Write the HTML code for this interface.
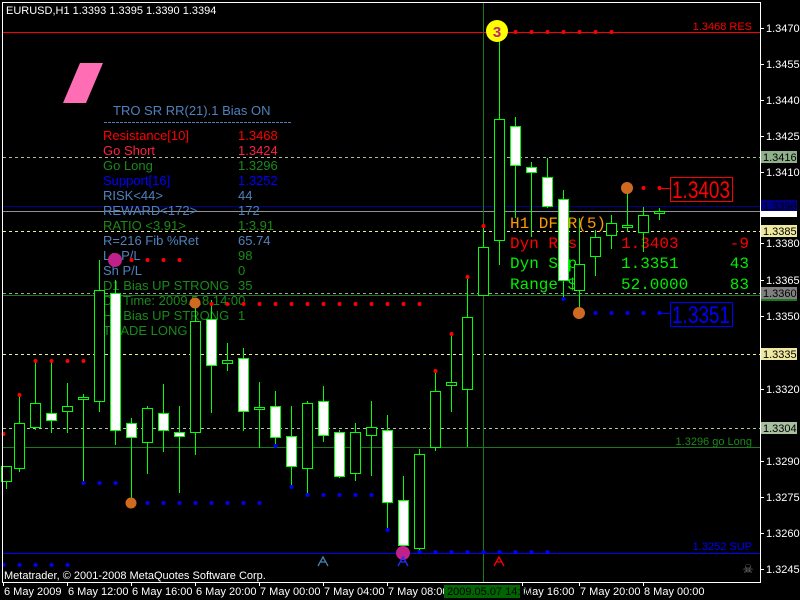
<!DOCTYPE html>
<html><head><meta charset="utf-8"><style>
html,body{margin:0;padding:0;background:#000;width:800px;height:600px;overflow:hidden}
svg{display:block}
text{font-family:"Liberation Sans",sans-serif;font-size:11px}
.ip text{font-size:13px}
text.m{font-family:"Liberation Mono",monospace;font-size:16px}
text.big{font-size:24px}
.ax{fill:#fff;font-size:11px}
</style></head><body>
<svg id="s" width="800" height="600" xmlns="http://www.w3.org/2000/svg">
<rect x="0" y="0" width="800" height="600" fill="#000"/>
<line x1="3" y1="32.5" x2="760" y2="32.5" stroke="#f00"/>
<line x1="3" y1="157.5" x2="760" y2="157.5" stroke="#a8c0a0" stroke-dasharray="3,3"/>
<line x1="3" y1="206.5" x2="760" y2="206.5" stroke="#00008b"/>
<line x1="3" y1="211.5" x2="760" y2="211.5" stroke="#9090a0"/>
<line x1="3" y1="231.5" x2="760" y2="231.5" stroke="#f0f090" stroke-dasharray="3,3"/>
<line x1="3" y1="293.5" x2="760" y2="293.5" stroke="#a0a0a0" stroke-dasharray="3,3"/>
<line x1="3" y1="295.5" x2="760" y2="295.5" stroke="#1a7a1a"/>
<line x1="3" y1="354.5" x2="760" y2="354.5" stroke="#f0f090" stroke-dasharray="3,3"/>
<line x1="3" y1="428.5" x2="760" y2="428.5" stroke="#b0c8a8" stroke-dasharray="3,3"/>
<line x1="3" y1="447.5" x2="760" y2="447.5" stroke="#1a7a1a"/>
<line x1="3" y1="553.5" x2="760" y2="553.5" stroke="#0000ff"/>
<line x1="483.5" y1="3" x2="483.5" y2="582" stroke="#1a7a1a"/>
<polygon points="80,63 103,63 86,103 63,103" fill="#ff6eb4"/>
<g class="ip">
<text x="113" y="115" fill="#4f81bd">TRO SR RR(21).1  Bias ON</text>
<text x="103" y="140" fill="#ff0000">Resistance[10]</text><text x="238" y="140" fill="#ff0000">1.3468</text>
<text x="103" y="155" fill="#ff2040">Go Short</text><text x="238" y="155" fill="#ff2040">1.3424</text>
<text x="103" y="170" fill="#1a8a1a">Go Long</text><text x="238" y="170" fill="#1a8a1a">1.3296</text>
<text x="103" y="185" fill="#0000ff">Support[16]</text><text x="238" y="185" fill="#0000ff">1.3252</text>
<text x="103" y="200" fill="#4f81bd">RISK&lt;44&gt;</text><text x="238" y="200" fill="#4f81bd">44</text>
<text x="103" y="215" fill="#4f81bd">REWARD&lt;172&gt;</text><text x="238" y="215" fill="#4f81bd">172</text>
<text x="103" y="230" fill="#1a8a1a">RATIO &lt;3.91&gt;</text><text x="238" y="230" fill="#1a8a1a">1:3.91</text>
<text x="103" y="245" fill="#4f81bd">R=216 Fib %Ret</text><text x="238" y="245" fill="#4f81bd">65.74</text>
<text x="103" y="260" fill="#4f81bd">Lg P/L</text><text x="238" y="260" fill="#1a8a1a">98</text>
<text x="103" y="275" fill="#4f81bd">Sh P/L</text><text x="238" y="275" fill="#1a8a1a">0</text>
<text x="103" y="290" fill="#1a8a1a">D1 Bias UP STRONG</text><text x="238" y="290" fill="#1a8a1a">35</text>
<text x="103" y="305" fill="#1a8a1a">D1 Time: 2009.5.8 14:00</text>
<text x="103" y="320" fill="#1a8a1a">H1 Bias UP STRONG</text><text x="238" y="320" fill="#1a8a1a">1</text>
<text x="103" y="335" fill="#1a8a1a">TRADE LONG</text>
</g>
<line x1="104" y1="122.5" x2="292" y2="122.5" stroke="#4f81bd" stroke-dasharray="3,1"/>
<text class="m" x="510" y="228" fill="#ff9900">H1 DFSR(5)</text>
<text class="m" x="510" y="248" fill="#ff0000">Dyn Res</text><text class="m" x="621" y="248" fill="#ff0000">1.3403</text><text class="m" x="749" y="248" fill="#ff0000" text-anchor="end">-9</text>
<text class="m" x="510" y="268" fill="#00ee00">Dyn Sup</text><text class="m" x="621" y="268" fill="#00ee00">1.3351</text><text class="m" x="749" y="268" fill="#00ee00" text-anchor="end">43</text>
<text class="m" x="510" y="289" fill="#00ee00">Range $</text><text class="m" x="621" y="289" fill="#00ee00">52.0000</text><text class="m" x="749" y="289" fill="#00ee00" text-anchor="end">83</text>
<g id="candles"></g>
<g id="dots"></g>
<circle cx="497" cy="31" r="11" fill="#ffff00"/>
<text x="497" y="37" text-anchor="middle" fill="#c02080" style="font-size:15px;font-weight:bold">3</text>
<circle cx="627" cy="188" r="6" fill="#d06a20"/>
<circle cx="579" cy="313" r="6" fill="#d06a20"/>
<circle cx="131" cy="503" r="5.5" fill="#d06a20"/>
<circle cx="195" cy="303" r="5.5" fill="#d06a20"/>
<circle cx="115" cy="260" r="7" fill="#c0208a"/>
<circle cx="403" cy="553" r="7" fill="#c0208a"/>
<line x1="659" y1="188.5" x2="670" y2="188.5" stroke="#f00"/>
<rect x="670.5" y="177.5" width="62" height="24" fill="none" stroke="#f00"/>
<text class="big" x="701" y="198" fill="#f00" text-anchor="middle" textLength="58" lengthAdjust="spacingAndGlyphs">1.3403</text>
<line x1="659" y1="313.5" x2="670" y2="313.5" stroke="#00f"/>
<rect x="670.5" y="302.5" width="62" height="24" fill="none" stroke="#00f"/>
<text class="big" x="701" y="323" fill="#00f" text-anchor="middle" textLength="58" lengthAdjust="spacingAndGlyphs">1.3351</text>
<text x="752" y="30" fill="#f00" text-anchor="end">1.3468 RES</text>
<text x="752" y="445" fill="#1a8a1a" text-anchor="end">1.3296 go Long</text>
<text x="752" y="550" fill="#00f" text-anchor="end">1.3252 SUP</text>
<path d="M318,566 L323,557 L328,566 M321,562 L325,562" stroke="#4682b4" fill="none" stroke-width="1.3"/>
<path d="M398,566 L403,557 L408,566 M401,562 L405,562" stroke="#2030ff" fill="none" stroke-width="1.3"/>
<path d="M494,566 L499,557 L504,566 M497,562 L501,562" stroke="#f00" fill="none" stroke-width="1.3"/>
<text x="748" y="573" fill="#808080" text-anchor="middle" style="font-size:12px">☠</text>
<text x="6" y="14" fill="#fff">EURUSD,H1  1.3393 1.3395 1.3390 1.3394</text>
<text x="4" y="579" fill="#fff">Metatrader, © 2001-2008 MetaQuotes Software Corp.</text>
<rect x="2.5" y="2.5" width="758" height="580" fill="none" stroke="#fff"/>
<g id="axis"></g>
<rect x="761" y="151" width="36" height="12" fill="#8fb08a"/><text x="763" y="161" fill="#000">1.3416</text>
<rect x="761" y="200" width="36" height="12" fill="#000080"/><text x="763" y="210" fill="#000">1.3396</text>
<rect x="761" y="211" width="36" height="6" fill="#fff"/>
<rect x="761" y="225" width="36" height="12" fill="#eee8a0"/><text x="763" y="235" fill="#000">1.3385</text>
<rect x="761" y="287" width="36" height="12" fill="#808080"/><text x="763" y="297" fill="#000">1.3360</text>
<rect x="761" y="299" width="36" height="2" fill="#1a7a1a"/>
<rect x="761" y="348" width="36" height="12" fill="#eee8a0"/><text x="763" y="358" fill="#000">1.3335</text>
<rect x="761" y="422" width="36" height="12" fill="#a8c0a0"/><text x="763" y="432" fill="#000">1.3304</text>
<rect x="444" y="585" width="76" height="13" fill="#006400"/>
<text x="447" y="595" fill="#000">2009.05.07 14:00</text>
</svg>
<script>
var NS="http://www.w3.org/2000/svg";
function el(p,t,a){var e=document.createElementNS(NS,t);for(var k in a)e.setAttribute(k,a[k]);p.appendChild(e);return e;}
var C=[[6,466,481,466,489,0],[19,423,468,395,472,0],[35,403,427,361,430,0],[51,413,420,361,433,1],[67,406,411,383,433,0],[83,397,399,394,483,0],[99,290,401,260,412,0],[115,293,430,280,445,1],[131,423,437,418,503,1],[147,408,442,406,474,0],[163,413,430,384,452,1],[179,432,436,406,493,1],[195,321,432,300,455,0],[211,319,365,300,413,1],[227,360,363,343,371,0],[243,358,411,348,431,1],[259,407,409,382,448,0],[275,406,437,391,445,1],[291,436,466,406,486,1],[307,403,468,401,495,0],[323,401,435,386,442,1],[339,432,476,430,478,1],[355,432,473,423,481,0],[371,427,435,401,476,0],[387,430,502,415,530,1],[403,500,545,476,551,1],[419,454,548,449,552,0],[435,391,447,371,451,0],[451,382,385,335,412,0],[467,317,389,277,447,0],[483,247,295,226,295,0],[499,119,240,28,265,0],[515,126,165,117,218,1],[531,167,172,162,237,1],[547,177,206,158,208,1],[563,199,280,190,297,1],[579,264,290,218,313,0],[595,237,256,230,276,0],[611,223,235,215,249,0],[627,225,227,193,232,0],[643,215,232,207,252,0],[659,211,213,208,220,0]];
var g=document.getElementById("candles");
C.forEach(function(c){el(g,"line",{x1:c[0]+.5,x2:c[0]+.5,y1:c[3],y2:c[4],stroke:"#00ff00"});
el(g,"rect",{x:c[0]-4.5,y:c[1]+.5,width:10,height:Math.max(c[2]-c[1],1),fill:c[5]?"#fff":"#000",stroke:"#00ff00"});});
var d=document.getElementById("dots");
function row(y,x0,x1,col){for(var x=x0;x<=x1;x+=16)el(d,"circle",{cx:x+.5,cy:y,r:2,fill:col});}
var R="#f00",B="#0000ff";
row(32,515,611,R);row(188,643,659,R);row(260,131,179,R);row(304,211,419,R);
row(226,483,483,R);row(277,467,467,R);row(334,451,451,R);row(371,435,435,R);
row(361,35,83,R);row(395,19,19,R);row(434,3,3,R);
row(483,83,115,B);row(503,131,259,B);row(487,291,291,B);row(495,307,371,B);row(446,275,275,B);
row(530,387,387,B);row(552,403,547,B);row(565,3,67,B);row(299,563,563,B);row(313,579,659,B);
var a=document.getElementById("axis");
[["1.3470",28],["1.3455",64],["1.3440",100],["1.3425",136],["1.3410",172],["1.3380",243],["1.3365",280],["1.3350",316],["1.3320",389],["1.3290",461],["1.3275",497],["1.3260",533],["1.3245",569]].forEach(function(t){
el(a,"line",{x1:761,x2:764,y1:t[1]+.5,y2:t[1]+.5,stroke:"#fff"});
var e=el(a,"text",{x:766,y:t[1]+4,"class":"ax"});e.textContent=t[0];});
[["6 May 2009",3],["6 May 12:00",67],["6 May 16:00",131],["6 May 20:00",195],["7 May 00:00",259],["7 May 04:00",323],["7 May 08:00",387],["May 16:00",522],["7 May 20:00",579],["8 May 00:00",643]].forEach(function(t){
el(a,"line",{x1:t[1]+.5,x2:t[1]+.5,y1:582,y2:586,stroke:"#fff"});
var e=el(a,"text",{x:t[1]+1,y:595,"class":"ax"});e.textContent=t[0];});
</script>
</body></html>
